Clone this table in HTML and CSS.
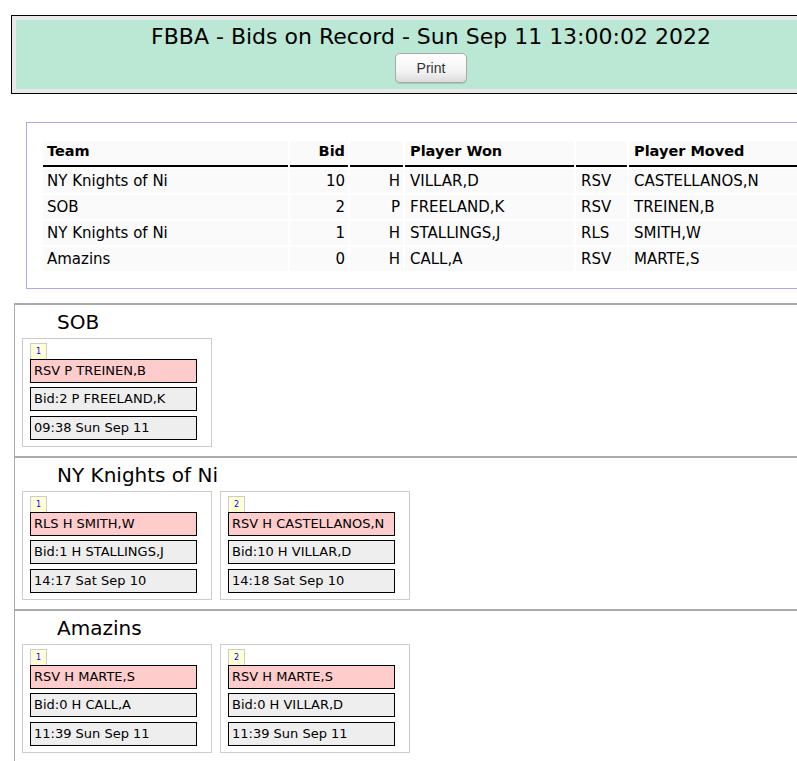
FILE: index.html
```html
<!DOCTYPE html>
<html>
<head>
<meta charset="utf-8">
<title>FBBA - Bids on Record</title>
<link rel="stylesheet" href="styles.css">
</head>
<body>
<div class="header">
  <div class="header-inner">
    <div class="title">FBBA - Bids on Record - Sun Sep 11 13:00:02 2022</div>
    <button class="print">Print</button>
  </div>
</div>

<div class="summary">
  <table class="bids">
    <thead>
      <tr><th class="c-team">Team</th><th class="c-bid num">Bid</th><th class="c-pos"></th><th class="c-won">Player Won</th><th class="c-act"></th><th class="c-moved">Player Moved</th></tr>
    </thead>
    <tbody>
      <tr><td class="first">NY Knights of Ni</td><td class="num">10</td><td class="num">H</td><td>VILLAR,D</td><td>RSV</td><td>CASTELLANOS,N</td></tr>
      <tr><td class="first">SOB</td><td class="num">2</td><td class="num">P</td><td>FREELAND,K</td><td>RSV</td><td>TREINEN,B</td></tr>
      <tr><td class="first">NY Knights of Ni</td><td class="num">1</td><td class="num">H</td><td>STALLINGS,J</td><td>RLS</td><td>SMITH,W</td></tr>
      <tr><td class="first">Amazins</td><td class="num">0</td><td class="num">H</td><td>CALL,A</td><td>RSV</td><td>MARTE,S</td></tr>
    </tbody>
  </table>
</div>

<div class="team">
  <div class="team-name">SOB</div>
  <div class="cards">
    <div class="card">
      <div class="badge">1</div>
      <div class="line moved">RSV P TREINEN,B</div>
      <div class="line bid">Bid:2 P FREELAND,K</div>
      <div class="line time">09:38 Sun Sep 11</div>
    </div>
  </div>
</div>

<div class="team">
  <div class="team-name">NY Knights of Ni</div>
  <div class="cards">
    <div class="card">
      <div class="badge">1</div>
      <div class="line moved">RLS H SMITH,W</div>
      <div class="line bid">Bid:1 H STALLINGS,J</div>
      <div class="line time">14:17 Sat Sep 10</div>
    </div>
    <div class="card">
      <div class="badge">2</div>
      <div class="line moved">RSV H CASTELLANOS,N</div>
      <div class="line bid">Bid:10 H VILLAR,D</div>
      <div class="line time">14:18 Sat Sep 10</div>
    </div>
  </div>
</div>

<div class="team">
  <div class="team-name">Amazins</div>
  <div class="cards">
    <div class="card">
      <div class="badge">1</div>
      <div class="line moved">RSV H MARTE,S</div>
      <div class="line bid">Bid:0 H CALL,A</div>
      <div class="line time">11:39 Sun Sep 11</div>
    </div>
    <div class="card">
      <div class="badge">2</div>
      <div class="line moved">RSV H MARTE,S</div>
      <div class="line bid">Bid:0 H VILLAR,D</div>
      <div class="line time">11:39 Sun Sep 11</div>
    </div>
  </div>
</div>
</body>
</html>
```

FILE: styles.css
```css
html {
  overflow: hidden;
}
body {
  margin: 0;
  padding: 15px 0 0 11px;
  font-family: "DejaVu Sans", Verdana, sans-serif;
  font-size: 13px;
  color: #000;
  background: #fff;
  width: 900px;
}

.header {
  width: 840px;
  border: 1px solid #000;
  background: #e8e8e8;
  padding: 4px;
  box-sizing: border-box;
  height: 79px;
}
.header-inner {
  background: #bae8d5;
  height: 100%;
  text-align: center;
  padding-top: 4px;
  box-sizing: border-box;
}
.title {
  font-size: 22px;
  line-height: 26px;
}
.print {
  margin-top: 3px;
  width: 72px;
  height: 30px;
  font-family: "Liberation Sans", Arial, sans-serif;
  font-size: 14px;
  color: #333;
  border: 1px solid #aaa;
  border-radius: 5px;
  background: linear-gradient(#ffffff, #f4f4f4 60%, #dcdcdc);
  box-shadow: 0 1px 1px rgba(0,0,0,0.15);
}

.summary {
  margin: 28px 0 0 15px;
  width: 840px;
  border: 1px solid #aaaaf0;
  padding: 16px 16px 15px 16px;
  box-sizing: border-box;
}
.bids {
  border-collapse: separate;
  border-spacing: 2px;
  margin: 0 -2px;
}
.bids th, .bids td {
  background: #fafafa;
  padding: 0 4px 0 5px;
  text-align: left;
  white-space: nowrap;
  font-size: 15px;
  line-height: 18px;
  height: 24px;
}
.bids th {
  font-weight: bold;
  font-size: 14.5px;
  border-bottom: 2px solid #000;
  padding-bottom: 4px;
  height: 20px;
}
.bids .c-team, .bids .first {
  padding-left: 4px;
}
.bids .num {
  text-align: right;
  padding-right: 3px;
}
.c-team { width: 237px; }
.c-bid { width: 50px; }
.c-pos { width: 44px; }
.c-won { width: 160px; }
.c-act { width: 42px; }
.c-moved { width: 200px; }

.team {
  margin: 14px 0 0 3px;
  width: 900px;
  border-top: 2px solid #aaa;
  border-left: 1px solid #aaa;
  padding: 0 0 9px 7px;
}
.team + .team {
  margin-top: 0;
}
.team-name {
  font-size: 20px;
  line-height: 24px;
  padding: 5px 0 4px 35px;
}
.cards {
  display: flex;
  gap: 8px;
}
.card {
  width: 190px;
  height: 109px;
  box-sizing: border-box;
  border: 1px solid #ccc;
  padding: 4px 0 0 7px;
}
.badge {
  width: 17px;
  height: 16px;
  box-sizing: border-box;
  border: 1px solid #ccc;
  border-bottom: none;
  background: #ffffd6;
  color: #00f;
  font-size: 8px;
  line-height: 15px;
  text-align: center;
}
.line {
  width: 167px;
  height: 24px;
  box-sizing: border-box;
  border: 1px solid #000;
  padding-left: 3px;
  line-height: 22px;
  font-size: 13px;
  white-space: nowrap;
  overflow: hidden;
}
.moved { background: #ffcccc; }
.bid { background: #eeeeee; margin-top: 4px; }
.time { background: #eeeeee; margin-top: 5px; }
```
